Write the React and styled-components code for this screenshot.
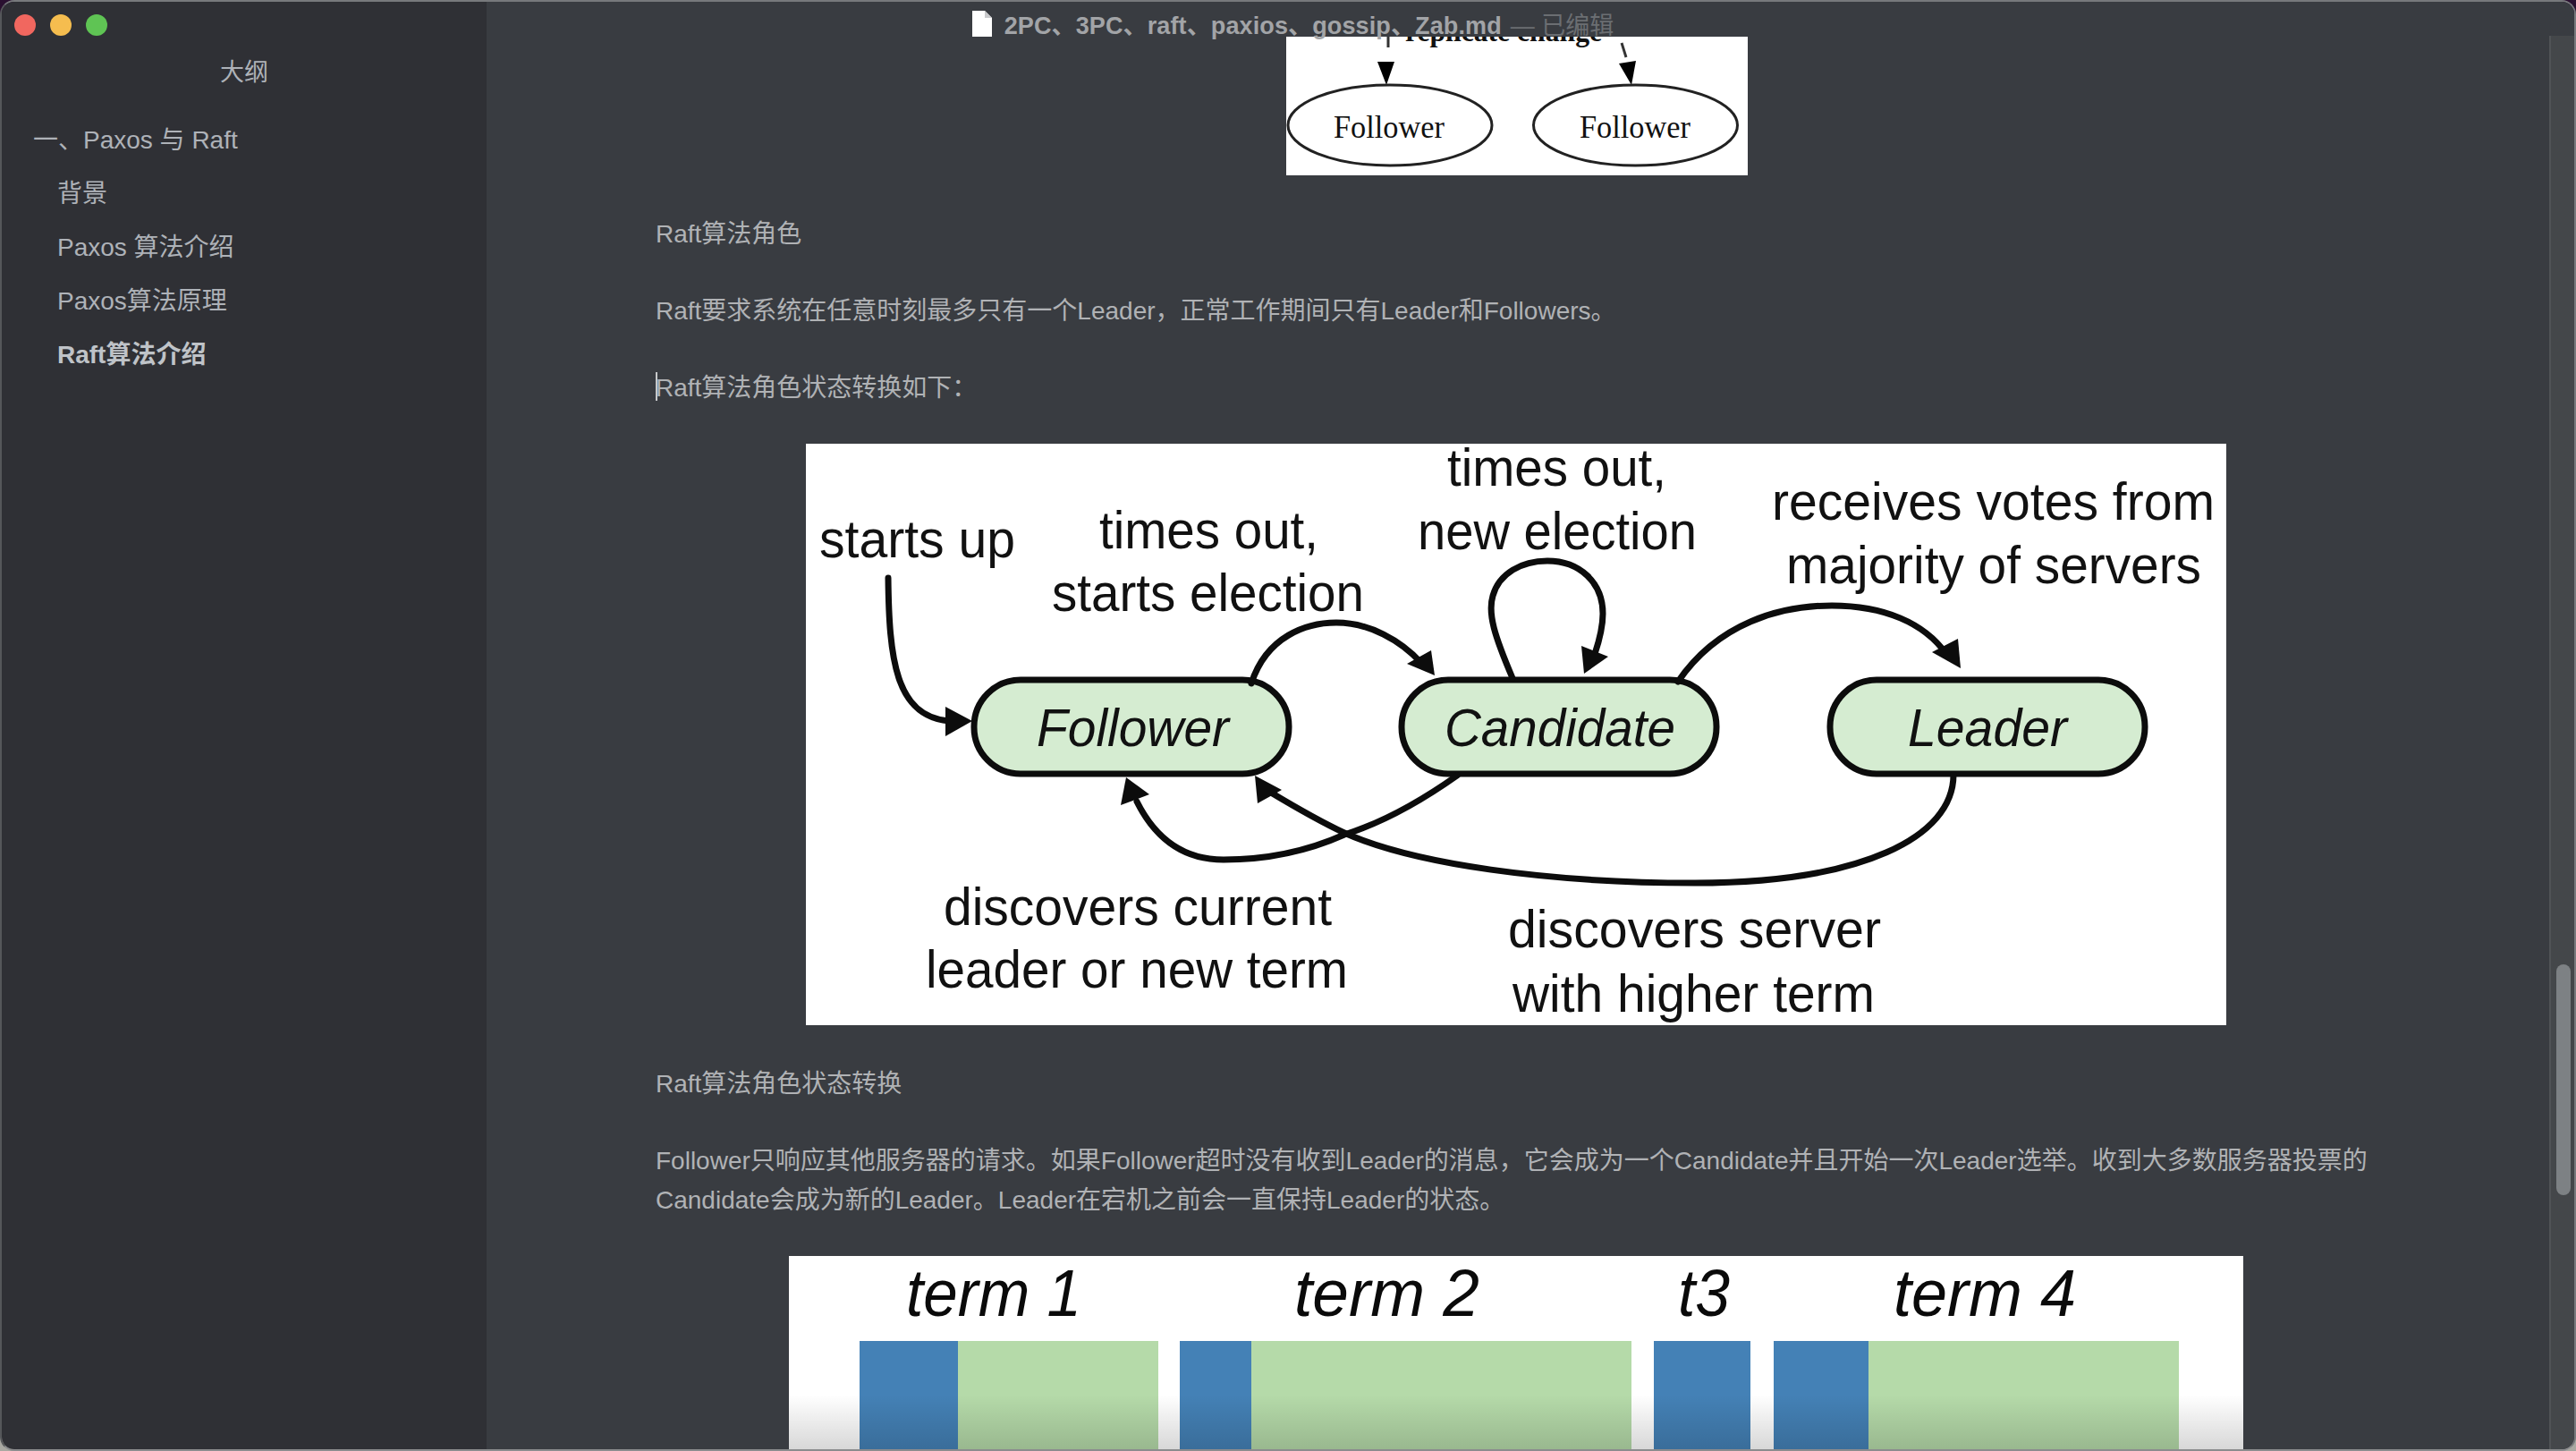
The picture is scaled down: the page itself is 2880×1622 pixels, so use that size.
import styled, { createGlobalStyle } from 'styled-components';

const GlobalStyle = createGlobalStyle`
  html, body {
    margin: 0;
    height: 100%;
    background: linear-gradient(to bottom, #2a1030 0%, #2a1030 50%, #a9a9a2 100%);
  }
  #root {
    height: 100%;
  }
`;

const SANS = `"Liberation Sans", "Noto Sans CJK SC", sans-serif`;

const Window = styled.div`
  position: relative;
  width: 2880px;
  height: 1622px;
  display: flex;
  overflow: hidden;
  box-sizing: border-box;
  border-radius: 16px;
  border-top: 2px solid #77797c;
  border-right: 2px solid #77797c;
  border-left: 2px solid #55575a;
  border-bottom: 2px solid #8b8c8e;
  font-family: ${SANS};
`;

const TitleBar = styled.div`
  position: absolute;
  top: 0;
  left: 0;
  right: 0;
  height: 48px;
  display: flex;
  justify-content: center;
  align-items: center;
  z-index: 2;
`;

const Lights = styled.div`
  position: absolute;
  left: 14px;
  top: 14px;
  display: flex;
  gap: 16px;
`;

const Light = styled.span`
  width: 24px;
  height: 24px;
  border-radius: 50%;
  background: ${({ color }) => color};
`;

const TitleGroup = styled.div`
  display: flex;
  align-items: center;
  gap: 14px;
  margin-left: 11px;
  font-size: 27px;
  white-space: nowrap;
`;

const FileName = styled.span`
  font-weight: 700;
  letter-spacing: 0.12px;
  color: #a2a4a7;
`;

const Edited = styled.span`
  color: #6b6e72;
  margin-left: -4px;
`;

const Sidebar = styled.aside`
  width: 542px;
  flex: none;
  background: #2f3035;
  color: #aeb2b8;
  padding-top: 61px;
  box-sizing: border-box;
`;

const SidebarTitle = styled.div`
  font-size: 27px;
  line-height: 36px;
  text-align: center;
  margin-bottom: 28px;
`;

const Outline = styled.ul`
  list-style: none;
  margin: 0;
  padding: 0;
`;

const OutlineItem = styled.li`
  font-size: 28px;
  line-height: 60px;
  padding-left: ${({ level }) => (level === 1 ? '35px' : '62px')};
  font-weight: ${({ active }) => (active ? 700 : 400)};
  color: ${({ active }) => (active ? '#bfc3c8' : '#aeb2b8')};
`;

const Main = styled.main`
  position: relative;
  flex: 1;
  min-width: 0;
  background: #393c41;
  overflow: hidden;
`;

const Page = styled.div`
  width: 1924px;
  margin-left: 189px;
  padding-top: 39px;
  display: flex;
  flex-direction: column;
  align-items: center;
  gap: 42px;
`;

const Para = styled.p`
  width: 100%;
  margin: 0 0 -2px;
  padding-top: 2px;
  font-size: 28px;
  line-height: 44px;
  color: #b0b2b5;
  position: relative;
`;

const Caret = styled.span`
  position: absolute;
  left: 0;
  top: 6px;
  width: 2px;
  height: 32px;
  background: #c8c9cb;
`;

const Figure = styled.div`
  width: ${({ w }) => w}px;
  height: ${({ h }) => h}px;
  margin-left: ${({ shift }) => shift || 0}px;
  flex: none;
  background: #fff;
  overflow: hidden;

  svg {
    display: block;
  }
`;

const Scrollbar = styled.div`
  position: absolute;
  top: 38px;
  right: 0;
  bottom: 0;
  width: 28px;
  background: #44474a;
  border-left: 2px solid #505356;
  box-sizing: border-box;
`;

const Thumb = styled.div`
  position: absolute;
  top: 1038px;
  left: 6px;
  width: 16px;
  height: 258px;
  border-radius: 8px;
  background: #7d8184;
`;

const FileIcon = () => (
  <svg width="22" height="29" viewBox="0 0 22 29">
    <path d="M0 0H14L22 8V29H0Z" fill="#fff" />
    <path d="M14 0L22 8H14Z" fill="#c9cacc" />
  </svg>
);

const Arrow = ({ d, head }) => (
  <g>
    <path d={d} fill="none" stroke="#0c0c0c" strokeWidth="7" strokeLinecap="round" />
    <polygon points={head} fill="#0c0c0c" />
  </g>
);

const stateLabels = [
  ['starts up', 15, 127, 219],
  ['times out,', 328, 117, 245],
  ['starts election', 275, 187, 349],
  ['times out,', 717, 47, 245],
  ['new election', 684, 118, 312],
  ['receives votes from', 1080, 85, 495],
  ['majority of servers', 1096, 156, 464],
  ['discovers current', 154, 538, 434],
  ['leader or new term', 134, 608, 472],
  ['discovers server', 785, 563, 417],
  ['with higher term', 790, 635, 405],
];

const states = [
  { x: 188, name: 'Follower', tx: 258, tw: 215 },
  { x: 666, name: 'Candidate', tx: 714, tw: 258 },
  { x: 1145, name: 'Leader', tx: 1232, tw: 178 },
];

const StateDiagram = () => (
  <svg width="1588" height="650" viewBox="0 0 1588 650" fontFamily="Liberation Sans, sans-serif" fill="#111">
    {states.map((s) => (
      <g key={s.name}>
        <rect x={s.x} y="264" width="352" height="105" rx="52" fill="#d5ecd1" stroke="#0c0c0c" strokeWidth="7" />
        <text x={s.tx} y="338" fontSize="60" fontStyle="italic" textLength={s.tw} lengthAdjust="spacingAndGlyphs">{s.name}</text>
      </g>
    ))}
    {stateLabels.map(([text, x, y, w]) => (
      <text key={text + y} x={x} y={y} fontSize="60" textLength={w} lengthAdjust="spacingAndGlyphs">{text}</text>
    ))}
    <Arrow d="M92 150C93 240 100 305 160 310" head="186,310 156,294 156,327" />
    <Arrow d="M498 268C515 215 560 200 593 200C630 200 665 220 688 245" head="703,259 672,246 699,231" />
    <Arrow d="M790 262C770 215 762 190 768 170C775 145 800 131 829 131C865 131 891 155 891 190C891 205 887 220 882 235" head="870,257 867,226 897,238" />
    <Arrow d="M975 266C1020 200 1090 181 1147 181C1205 181 1250 200 1275 235" head="1291,251 1259,233 1288,218" />
    <Arrow d="M728 371C680 405 640 425 602 437C555 458 510 465 467 465C420 465 390 440 370 400" head="358,373 352,404 384,392" />
    <Arrow d="M1283 370C1283 440 1180 491 994 491C830 491 680 470 602 435C570 420 545 405 520 390" head="502,371 505,402 532,387" />
  </svg>
);

const ReplicationFigure = () => (
  <svg width="516" height="155" viewBox="0 0 516 155" fontFamily="Liberation Serif, serif" fill="#111">
    <text x="133" y="5" fontSize="34" fontWeight="700" textLength="220" lengthAdjust="spacingAndGlyphs">replicate change</text>
    <path d="M114 0V12" stroke="#333" strokeWidth="3" />
    <polygon points="112,54 102,28 121,28" fill="#000" />
    <path d="M375 7L380 23" stroke="#333" strokeWidth="3" />
    <polygon points="386,54 372,30 391,27" fill="#000" />
    <ellipse cx="116" cy="99" rx="114" ry="45" fill="none" stroke="#222" strokeWidth="3" />
    <ellipse cx="390.5" cy="99" rx="114" ry="45" fill="none" stroke="#222" strokeWidth="3" />
    <text x="53" y="113" fontSize="36" textLength="124" lengthAdjust="spacingAndGlyphs">Follower</text>
    <text x="328" y="113" fontSize="36" textLength="124" lengthAdjust="spacingAndGlyphs">Follower</text>
  </svg>
);

const termBars = [
  { x: 79, blue: 110, green: 224 },
  { x: 437, blue: 80, green: 425 },
  { x: 967, blue: 108, green: 0 },
  { x: 1101, blue: 106, green: 347 },
];

const termLabels = [
  ['term 1', 131, 196],
  ['term 2', 565, 207],
  ['t3', 994, 58],
  ['term 4', 1235, 204],
];

const TermFigure = () => (
  <svg width="1626" height="218" viewBox="0 0 1626 218" fontFamily="Liberation Sans, sans-serif" fill="#0a0a0a">
    <defs>
      <linearGradient id="termFade" x1="0" y1="0" x2="0" y2="1">
        <stop offset="0" stopColor="#000" stopOpacity="0" />
        <stop offset="1" stopColor="#000" stopOpacity="0.16" />
      </linearGradient>
    </defs>
    {termLabels.map(([text, x, w]) => (
      <text key={text} x={x} y="67" fontSize="74" fontStyle="italic" textLength={w} lengthAdjust="spacingAndGlyphs">{text}</text>
    ))}
    {termBars.map((b) => (
      <g key={b.x}>
        <rect x={b.x} y="95" width={b.blue} height="123" fill="#4481b6" />
        <rect x={b.x + b.blue} y="95" width={b.green} height="123" fill="#b5daa9" />
      </g>
    ))}
    <rect x="0" y="155" width="1626" height="63" fill="url(#termFade)" />
  </svg>
);

const outline = [
  { text: '一、Paxos 与 Raft', level: 1 },
  { text: '背景', level: 2 },
  { text: 'Paxos 算法介绍', level: 2 },
  { text: 'Paxos算法原理', level: 2 },
  { text: 'Raft算法介绍', level: 2, active: true },
];

const App = () => (
  <>
    <GlobalStyle />
    <Window>
      <TitleBar>
        <Lights>
          <Light color="#f1675f" />
          <Light color="#f5bd4f" />
          <Light color="#5fc454" />
        </Lights>
        <TitleGroup>
          <FileIcon />
          <FileName>2PC、3PC、raft、paxios、gossip、Zab.md</FileName>
          <Edited>— 已编辑</Edited>
        </TitleGroup>
      </TitleBar>
      <Sidebar>
        <SidebarTitle>大纲</SidebarTitle>
        <Outline>
          {outline.map((item) => (
            <OutlineItem key={item.text} level={item.level} active={item.active}>{item.text}</OutlineItem>
          ))}
        </Outline>
      </Sidebar>
      <Main>
        <Page>
          <Figure w={516} h={155} shift={2}><ReplicationFigure /></Figure>
          <Para>Raft算法角色</Para>
          <Para>Raft要求系统在任意时刻最多只有一个Leader，正常工作期间只有Leader和Followers。</Para>
          <Para><Caret />Raft算法角色状态转换如下：</Para>
          <Figure w={1588} h={650}><StateDiagram /></Figure>
          <Para>Raft算法角色状态转换</Para>
          <Para>
            Follower只响应其他服务器的请求。如果Follower超时没有收到Leader的消息，它会成为一个Candidate并且开始一次Leader选举。收到大多数服务器投票的<br />
            Candidate会成为新的Leader。Leader在宕机之前会一直保持Leader的状态。
          </Para>
          <Figure w={1626} h={218}><TermFigure /></Figure>
        </Page>
        <Scrollbar><Thumb /></Scrollbar>
      </Main>
    </Window>
  </>
);

export default App;
